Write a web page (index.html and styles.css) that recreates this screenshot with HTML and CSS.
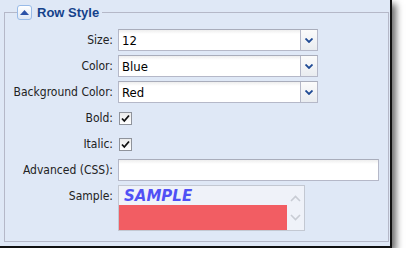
FILE: index.html
```html
<!DOCTYPE html>
<html lang="en">
<head>
  <meta charset="UTF-8">
  <title>Row Style</title>
  <link rel="stylesheet" href="styles.css">
</head>
<body>

  <div class="panel">
    <fieldset class="group">
      <legend>
        <span class="toggle">
          <svg width="9" height="5" viewBox="0 0 9 5"><path d="M0 5 L4.5 0 L9 5 Z" fill="#2b52a8"/></svg>
        </span>
        <span class="title">Row Style</span>
      </legend>

      <div class="form">
        <label>Size:</label>
        <div class="combo">
          <span class="value">12</span>
          <span class="trigger"><svg width="8" height="5" viewBox="0 0 8 5"><path d="M0.5 0.5 L4 4 L7.5 0.5" fill="none" stroke="#1f4a94" stroke-width="1.8"/></svg></span>
        </div>

        <label>Color:</label>
        <div class="combo">
          <span class="value">Blue</span>
          <span class="trigger"><svg width="8" height="5" viewBox="0 0 8 5"><path d="M0.5 0.5 L4 4 L7.5 0.5" fill="none" stroke="#1f4a94" stroke-width="1.8"/></svg></span>
        </div>

        <label>Background Color:</label>
        <div class="combo">
          <span class="value">Red</span>
          <span class="trigger"><svg width="8" height="5" viewBox="0 0 8 5"><path d="M0.5 0.5 L4 4 L7.5 0.5" fill="none" stroke="#1f4a94" stroke-width="1.8"/></svg></span>
        </div>

        <label>Bold:</label>
        <div class="check-cell">
          <span class="check"><svg width="11" height="11" viewBox="0 0 11 11"><path d="M2 5.5 L4.3 8 L9 2.5" fill="none" stroke="#111" stroke-width="1.8"/></svg></span>
        </div>

        <label>Italic:</label>
        <div class="check-cell">
          <span class="check"><svg width="11" height="11" viewBox="0 0 11 11"><path d="M2 5.5 L4.3 8 L9 2.5" fill="none" stroke="#111" stroke-width="1.8"/></svg></span>
        </div>

        <label>Advanced (CSS):</label>
        <div class="text-input"></div>

        <label class="top">Sample:</label>
        <div class="sample">
          <div class="sample-body">
            <div class="sample-text">SAMPLE</div>
            <div class="sample-fill"></div>
          </div>
          <div class="scroll">
            <svg width="11" height="7" viewBox="0 0 11 7"><path d="M1 6 L5.5 1.5 L10 6" fill="none" stroke="#c8ccd4" stroke-width="1.6"/></svg>
            <svg width="11" height="7" viewBox="0 0 11 7"><path d="M1 1 L5.5 5.5 L10 1" fill="none" stroke="#c8ccd4" stroke-width="1.6"/></svg>
          </div>
        </div>
      </div>
    </fieldset>
  </div>

</body>
</html>
```

FILE: styles.css
```css
body {
  margin: 0;
  background: #fff;
  font-family: "DejaVu Sans Condensed", "DejaVu Sans", sans-serif;
  font-size: 12px;
  color: #222;
}
.panel {
  width: 392px;
  height: 248px;
  box-sizing: border-box;
  padding: 4px 2px 0 4px;
  background: #dfe8f6;
  border-right: 2px solid #111;
  border-bottom: 2px solid #111;
  box-shadow: 4px 4px 7px rgba(0,0,0,0.6);
}
.group {
  width: 385px;
  height: 238px;
  box-sizing: border-box;
  margin: 0;
  padding: 9px 0 0 0;
  border: 1px solid #b5b8c8;
}
.group legend {
  margin-left: 12px;
  padding: 0 3px 0 0;
  height: 16px;
  display: flex;
  align-items: center;
}
.toggle {
  width: 13px;
  height: 13px;
  border: 1px solid #99bbe8;
  border-radius: 3px;
  background: linear-gradient(#ffffff, #dde7f5);
  display: flex;
  align-items: center;
  justify-content: center;
}
.title {
  margin-left: 5px;
  font-family: "Liberation Sans", Arial, sans-serif;
  font-weight: bold;
  font-size: 13px;
  color: #15428b;
}
.form {
  display: grid;
  grid-template-columns: 108px auto;
  column-gap: 5px;
  row-gap: 4px;
  align-items: center;
  justify-items: start;
}
.form label {
  justify-self: end;
  color: #222;
}
.form label.top {
  align-self: start;
  padding-top: 4px;
}
.combo {
  width: 200px;
  height: 22px;
  box-sizing: border-box;
  display: flex;
  border: 1px solid #b5b8c8;
  border-top-color: #a9adbb;
  background: linear-gradient(#eeeeee, #ffffff 4px);
}
.combo .value {
  flex: 1;
  padding: 3px 3px 0 3px;
  font-size: 13px;
  color: #000;
}
.trigger {
  width: 16px;
  border-left: 1px solid #b5b8c8;
  background: linear-gradient(#fbfbfb, #e9ecf0);
  display: flex;
  align-items: center;
  justify-content: center;
}
.check-cell {
  height: 22px;
  display: flex;
  align-items: center;
  padding-left: 1px;
}
.check {
  width: 13px;
  height: 13px;
  box-sizing: border-box;
  border: 1px solid #8f939b;
  background: linear-gradient(#ececec, #ffffff);
  display: flex;
  align-items: center;
  justify-content: center;
}
.text-input {
  width: 261px;
  height: 22px;
  box-sizing: border-box;
  border: 1px solid #b5b8c8;
  border-top-color: #a9adbb;
  background: linear-gradient(#eeeeee, #ffffff 4px);
}
.sample {
  width: 187px;
  height: 46px;
  box-sizing: border-box;
  border: 1px solid #c3c8d2;
  background: #eff2f9;
  display: flex;
}
.sample-body {
  flex: 1;
}
.sample-text {
  height: 19px;
  padding-left: 5px;
  font-family: "DejaVu Sans", sans-serif;
  font-size: 15px;
  font-weight: bold;
  font-style: italic;
  line-height: 21px;
  color: #5050f5;
}
.sample-fill {
  height: 25px;
  background: #f25d63;
}
.scroll {
  width: 17px;
  display: flex;
  flex-direction: column;
  align-items: center;
  justify-content: space-around;
  padding: 3px 0;
}
```
